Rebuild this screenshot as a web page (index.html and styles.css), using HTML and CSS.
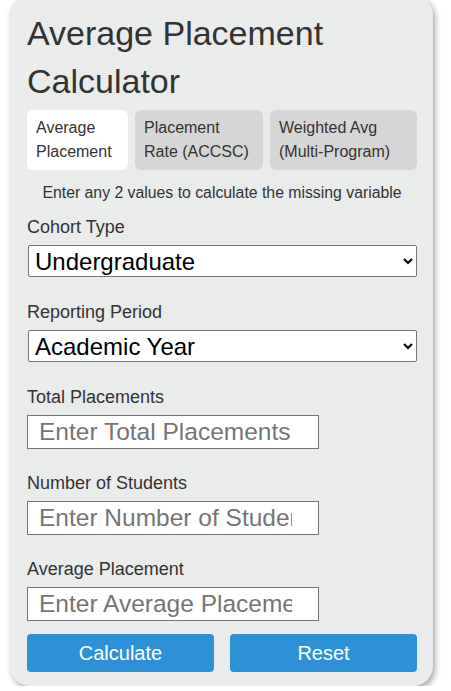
FILE: index.html
```html
<!DOCTYPE html>
<html lang="en">
<head>
  <meta charset="UTF-8">
  <meta name="viewport" content="width=device-width, initial-scale=1.0">
  <title>Average Placement Calculator</title>
  <link rel="stylesheet" href="styles.css">
</head>
<body>
  <div class="calc">
    <h1 class="title">Average Placement Calculator</h1>
    <div class="tabs">
      <button class="tab active">Average Placement</button>
      <button class="tab">Placement Rate (ACCSC)</button>
      <button class="tab">Weighted Avg (Multi-Program)</button>
    </div>
    <p class="hint">Enter any 2 values to calculate the missing variable</p>

    <div class="field pick">
      <label for="cohort">Cohort Type</label>
      <select id="cohort" class="sel">
        <option>Undergraduate</option>
        <option>Graduate</option>
      </select>
    </div>
    <div class="field pick">
      <label for="period">Reporting Period</label>
      <select id="period" class="sel">
        <option>Academic Year</option>
        <option>Calendar Year</option>
      </select>
    </div>
    <div class="field">
      <label for="total">Total Placements</label>
      <input id="total" class="num" type="text" placeholder="Enter Total Placements">
    </div>
    <div class="field">
      <label for="students">Number of Students</label>
      <input id="students" class="num" type="text" placeholder="Enter Number of Students">
    </div>
    <div class="field last">
      <label for="avg">Average Placement</label>
      <input id="avg" class="num" type="text" placeholder="Enter Average Placement">
    </div>
    <div class="row">
      <button class="btn" id="calcBtn">Calculate</button>
      <button class="btn" id="resetBtn">Reset</button>
    </div>
  </div>

  <script>
    const total = document.getElementById('total');
    const students = document.getElementById('students');
    const avg = document.getElementById('avg');

    document.getElementById('calcBtn').addEventListener('click', () => {
      let t = parseFloat(total.value);
      let s = parseFloat(students.value);
      let a = parseFloat(avg.value);
      if(!isNaN(t) && !isNaN(s) && s !== 0){
        avg.value = Math.round(100 * t / s) / 100;
      } else if(!isNaN(t) && !isNaN(a) && a !== 0){
        students.value = Math.round(t / a);
      } else if(!isNaN(s) && !isNaN(a)){
        total.value = Math.round(s * a);
      }
    });

    document.getElementById('resetBtn').addEventListener('click', () => {
      total.value = "";
      students.value = "";
      avg.value = "";
    });

    document.querySelectorAll('.tab').forEach(tab => {
      tab.addEventListener('click', () => {
        document.querySelectorAll('.tab').forEach(t => t.classList.remove('active'));
        tab.classList.add('active');
      });
    });
  </script>
</body>
</html>
```

FILE: styles.css
```css
body {
  margin: 0;
  background: #fff;
  font-family: "Liberation Sans", Arial, sans-serif;
  color: #333;
}
.calc {
  width: 390px;
  margin: -5px 0 0 10px;
  padding: 14px 16px 14px 17px;
  background: #eaebeb;
  border-radius: 20px;
  box-shadow: 2px 3px 6px rgba(0, 0, 0, 0.35);
}
.title {
  margin: 0 0 5px 0;
  font-size: 34px;
  font-weight: normal;
  line-height: 48px;
  color: #333;
}
.tabs {
  display: grid;
  grid-template-columns: 101px 128px 1fr;
  gap: 7px;
}
.tab {
  height: 60px;
  padding: 6px 9px;
  border: none;
  border-radius: 6px;
  background: #d6d6d6;
  font-family: inherit;
  font-size: 16px;
  line-height: 24px;
  color: #333;
  text-align: left;
}
.tab.active {
  background: #fff;
}
.hint {
  margin: 13px 0 14px 0;
  font-size: 15.8px;
  line-height: 20px;
  text-align: center;
  color: #333;
}
.field {
  margin-bottom: 24px;
}
.field.pick {
  margin-bottom: 25px;
}
.field.last {
  margin-bottom: 13px;
}
.field label {
  display: block;
  font-size: 18px;
  line-height: 20px;
  margin-bottom: 8px;
}
.sel {
  display: block;
  width: 389px;
  height: 32px;
  margin-left: 1px;
  padding: 0 2px;
  border: 1px solid #767676;
  border-radius: 2px;
  background: #fff;
  font-family: inherit;
  font-size: 24px;
  color: #000;
}
.num {
  display: block;
  box-sizing: border-box;
  width: 292px;
  height: 34px;
  margin-top: 1px;
  padding: 0 26px 0 11px;
  border: 1px solid #767676;
  background: #fff;
  font-family: inherit;
  font-size: 24.5px;
  color: #000;
}
.num::placeholder {
  color: #757575;
}
.row {
  display: flex;
  gap: 16px;
}
.btn {
  flex: 1;
  height: 38px;
  border: none;
  border-radius: 4px;
  background: #2e91d8;
  color: #fff;
  font-family: inherit;
  font-size: 20px;
}
```
